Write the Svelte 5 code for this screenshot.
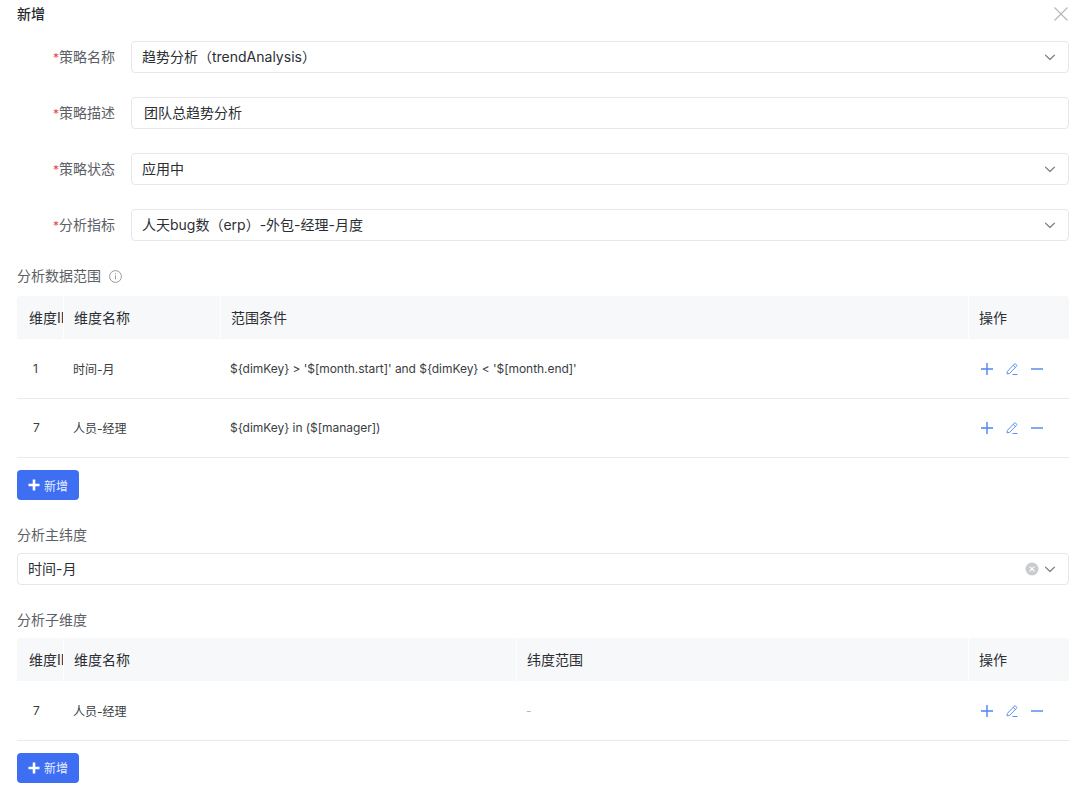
<script>
	const fields = [
		{ label: '策略名称', value: '趋势分析（trendAnalysis）', select: true },
		{ label: '策略描述', value: '团队总趋势分析', select: false },
		{ label: '策略状态', value: '应用中', select: true },
		{ label: '分析指标', value: '人天bug数（erp）-外包-经理-月度', select: true },
	]
	const rangeRows = [
		{ id: 1, name: '时间-月', cond: "${dimKey} > '$[month.start]' and ${dimKey} < '$[month.end]'" },
		{ id: 7, name: '人员-经理', cond: '${dimKey} in ($[manager])' },
	]
	const subRows = [{ id: 7, name: '人员-经理', cond: '-' }]
</script>

{#snippet chevron()}
	<svg class="chevron" width="12" height="12" viewBox="0 0 12 12" fill="none">
		<path d="M1.2 3.8 6 8.4l4.8-4.6" stroke="#6b6f76" stroke-width="1.1" />
	</svg>
{/snippet}

{#snippet addButton()}
	<button class="add">
		<svg width="12" height="12" viewBox="0 0 12 12"><path d="M6 0.5v11M0.5 6h11" stroke="#fff" stroke-width="2.6" /></svg>
		<span>新增</span>
	</button>
{/snippet}

{#snippet table(rows, thirdTitle, nameClass)}
	<div class="table {nameClass}">
		<div class="row head">
			<div class="cell id">维度ID</div>
			<div class="cell name">维度名称</div>
			<div class="cell cond">{thirdTitle}</div>
			<div class="cell ops">操作</div>
		</div>
		{#each rows as row}
			<div class="row body">
				<div class="cell id">{row.id}</div>
				<div class="cell name">{row.name}</div>
				<div class="cell cond" class:muted={row.cond === '-'}>{row.cond}</div>
				<div class="cell ops">
					<svg width="14" height="14" viewBox="0 0 14 14"><path d="M7 1v12M1 7h12" stroke="#4f84ee" stroke-width="1.4" /></svg>
					<svg width="14" height="14" viewBox="0 0 14 14" fill="none" stroke="#5f8fef" stroke-width="1">
						<path d="M2.4 9.4 9.2 2.2a1.1 1.1 0 0 1 1.6 0l.6.6a1.1 1.1 0 0 1 0 1.6L4.6 11.4l-2.6.4zM8.2 3.3l2.4 2.4M7.5 12.5h5" />
					</svg>
					<svg width="14" height="14" viewBox="0 0 14 14"><path d="M1 7h12" stroke="#4f84ee" stroke-width="1.4" /></svg>
				</div>
			</div>
		{/each}
	</div>
{/snippet}

<div class="modal">
	<header>
		<span class="title">新增</span>
		<svg class="close" width="14" height="14" viewBox="0 0 14 14"><path d="M.5.5l13 13M13.5.5l-13 13" stroke="#b4b6ba" stroke-width="1.1" /></svg>
	</header>

	<div class="fields">
		{#each fields as f}
			<div class="field">
				<div class="label"><i>*</i>{f.label}</div>
				<div class="control" class:plain={!f.select}>
					<span>{f.value}</span>
					{#if f.select}{@render chevron()}{/if}
				</div>
			</div>
		{/each}
	</div>

	<div class="section first">
		分析数据范围
		<svg class="info" width="13" height="13" viewBox="0 0 13 13" fill="none" stroke="#8b8e94" stroke-width="0.9">
			<circle cx="6.5" cy="6.5" r="5.9" /><path d="M6.5 5.4v4M6.5 3.2v1.1" />
		</svg>
	</div>
	{@render table(rangeRows, '范围条件', 'narrow')}
	{@render addButton()}

	<div class="section main">分析主纬度</div>
	<div class="control single">
		<span>时间-月</span>
		<div class="suffix">
			<svg width="14" height="14" viewBox="0 0 14 14">
				<circle cx="7" cy="7" r="6.5" fill="#c9cbcf" />
				<path d="M4.6 4.6l4.8 4.8M9.4 4.6l-4.8 4.8" stroke="#fff" stroke-width="1.3" />
			</svg>
			{@render chevron()}
		</div>
	</div>

	<div class="section sub">分析子维度</div>
	{@render table(subRows, '纬度范围', 'wide')}
	{@render addButton()}
</div>

<style>
	:global(body) {
		background: #fff;
		font-family: Inter, 'Noto Sans CJK SC', sans-serif;
		overflow: hidden;
	}
	.modal {
		display: flex;
		flex-direction: column;
		align-items: stretch;
		box-sizing: border-box;
		padding: 0 10px 0 17px;
		height: 790px;
		color: #2b2e33;
	}
	header {
		display: flex;
		justify-content: space-between;
		align-items: center;
		margin-right: 1px;
		height: 28px;
	}
	.title {
		padding-bottom: 2px;
		color: #25282c;
		font-weight: 500;
		font-size: 14px;
	}
	.fields {
		display: flex;
		flex-direction: column;
		gap: 24px;
		margin-top: 13px;
	}
	.field {
		display: flex;
		gap: 16px;
		align-items: center;
	}
	.label {
		flex: none;
		box-sizing: border-box;
		padding-bottom: 2px;
		width: 98px;
		color: #5c6066;
		font-size: 14px;
		text-align: right;
	}
	.label i {
		color: #e5484d;
		font-style: normal;
		font-size: 12px;
	}
	.control {
		display: flex;
		flex: 1;
		justify-content: space-between;
		align-items: center;
		box-sizing: border-box;
		border: 1px solid #e6e7ea;
		border-radius: 4px;
		padding: 0 12px 0 10px;
		height: 32px;
		color: #2b2e33;
		font-size: 14px;
	}
	.control.single {
		flex: 0 0 32px;
	}
	.control > span {
		padding-bottom: 2px;
	}
	.control.plain {
		padding-left: 12px;
	}
	.chevron {
		flex: none;
	}
	.suffix {
		display: flex;
		gap: 5px;
		align-items: center;
	}
	.section {
		color: #5c6066;
		font-size: 14px;
		line-height: 20px;
	}
	.section.first {
		display: flex;
		gap: 8px;
		align-items: center;
		margin-top: 25px;
		margin-bottom: 10px;
	}
	.section.main,
	.section.sub {
		margin-top: 25px;
		margin-bottom: 8px;
	}
	.row {
		display: grid;
		align-items: center;
	}
	.narrow .row {
		grid-template-columns: 46px 157px 748px 101px;
	}
	.wide .row {
		grid-template-columns: 46px 453px 452px 101px;
	}
	.head {
		border-radius: 4px 4px 0 0;
		background: #f7f8fa;
		height: 43px;
		font-size: 14px;
	}
	.head .cell {
		display: flex;
		align-items: center;
		box-sizing: border-box;
		border-left: 1px solid #fff;
		padding-bottom: 2px;
		padding-left: 10px;
		height: 43px;
		overflow: hidden;
		white-space: nowrap;
	}
	.head .cell.id {
		border-left: 0;
		padding-left: 12px;
	}
	.body {
		box-sizing: border-box;
		border-bottom: 1px solid #e9eaec;
		height: 59.5px;
		color: #3a3d42;
		font-size: 12px;
	}
	.body .cell {
		padding-left: 10px;
	}
	.body .cell.id {
		padding-left: 16px;
	}
	.body .cond {
		letter-spacing: -0.05px;
	}
	.muted {
		color: #b4b6ba;
	}
	.body .ops {
		display: flex;
		gap: 11px;
		align-items: center;
		padding-top: 1px;
		padding-left: 12px;
	}
	.add {
		display: flex;
		gap: 4px;
		align-items: center;
		align-self: flex-start;
		margin-top: 12px;
		border: 0;
		border-radius: 4px;
		background: #3e6ff2;
		padding: 0 0 0 11px;
		width: 62px;
		height: 30px;
		color: #e6edff;
		font-size: 12px;
		font-family: inherit;
	}
</style>
